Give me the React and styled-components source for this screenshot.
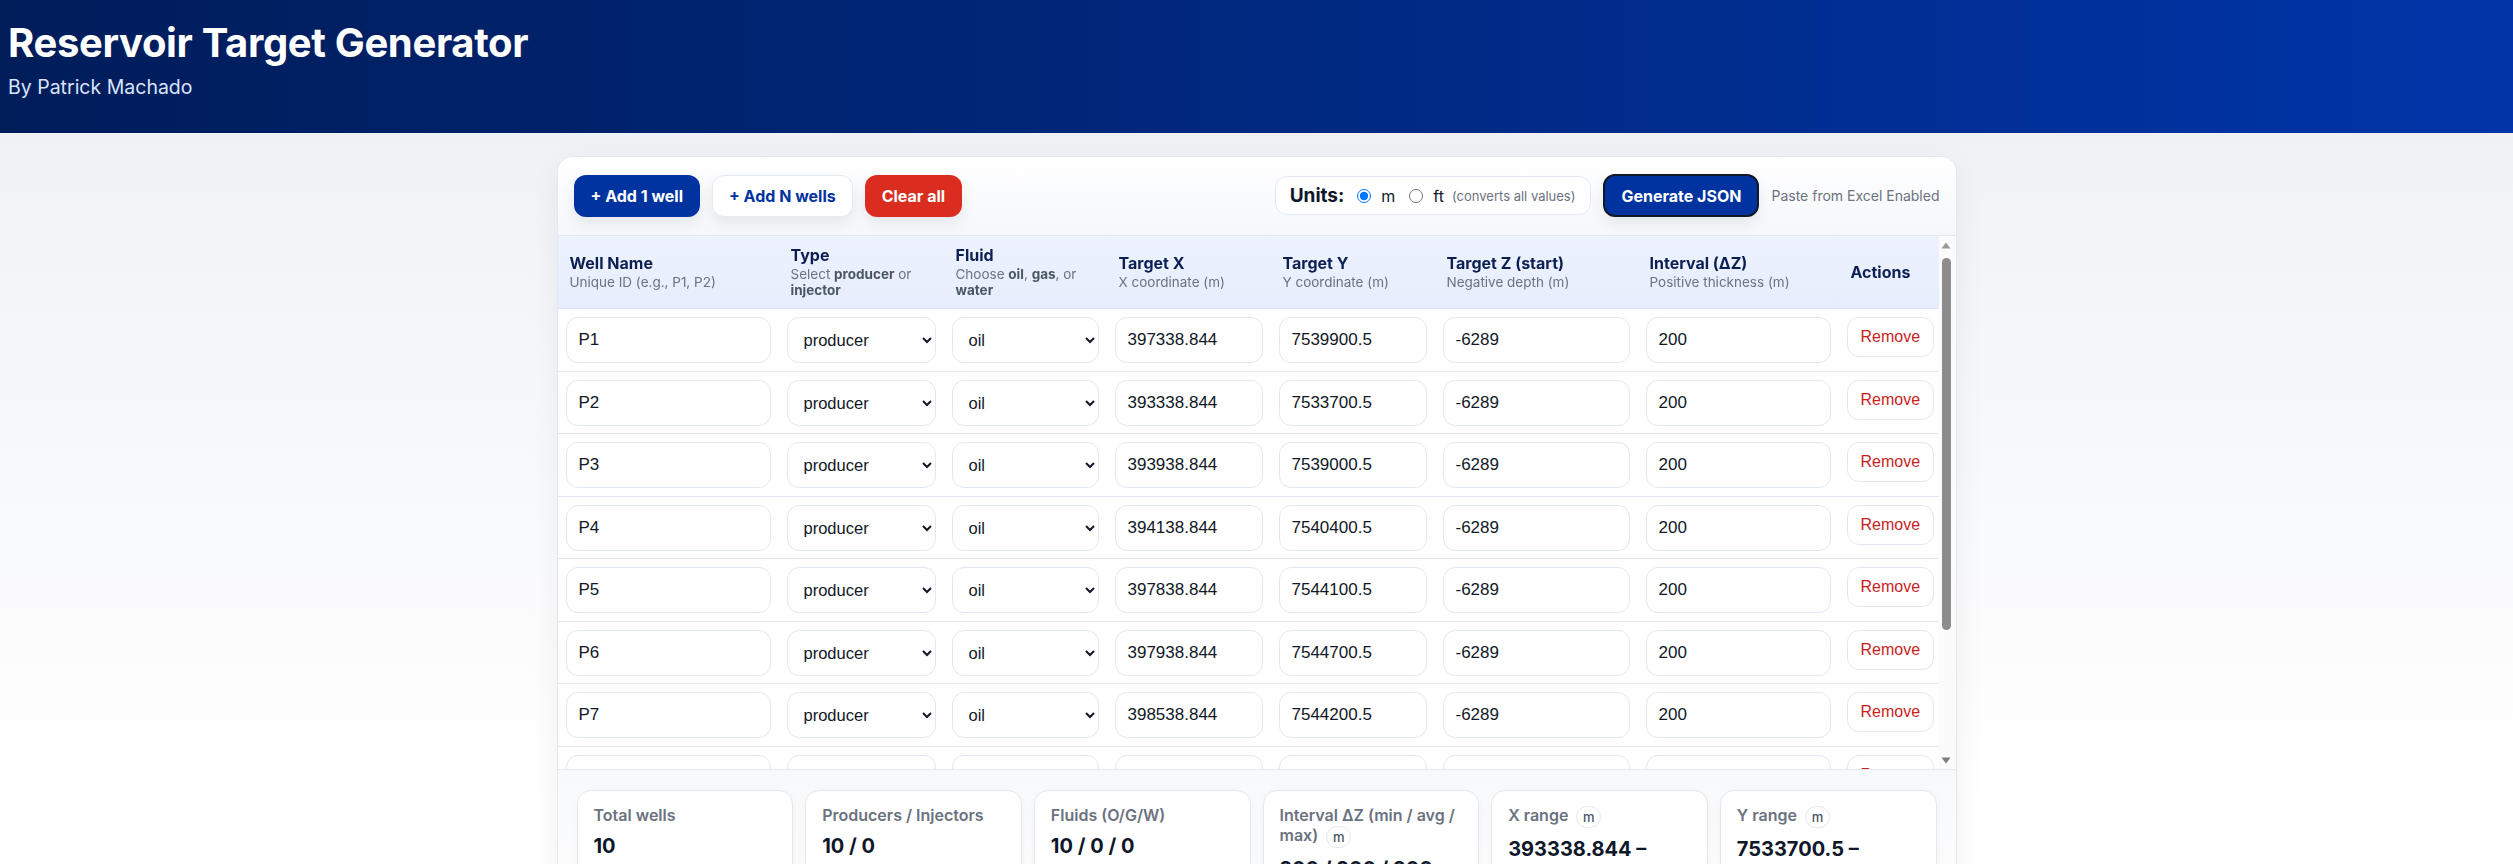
import React from "react";
import styled, { createGlobalStyle } from "styled-components";

const GlobalStyle = createGlobalStyle`
  html, body { margin: 0; padding: 0; }
  body {
    font-family: Inter, "Noto Sans", Arial, sans-serif;
    color: #0f172a;
    background: linear-gradient(180deg, #eceef3 0px, #f7f8fa 420px, #ffffff 800px);
    min-height: 100vh;
  }
  * { box-sizing: border-box; }
`;

const Header = styled.header`
  background: linear-gradient(90deg, #001d5a 0%, #00287f 50%, #0034a8 100%);
  padding: 19px 8px 33px;
  color: #fff;
`;

const Title = styled.h1`
  margin: 0;
  font-size: 40px;
  line-height: 48px;
  font-weight: 700;
  letter-spacing: -0.35px;
`;

const Subtitle = styled.p`
  margin: 7px 0 0;
  font-size: 19.5px;
  line-height: 26px;
  color: #dbe4ff;
`;

const Main = styled.main`
  padding: 23px 0 40px;
`;

const Card = styled.section`
  max-width: 1400px;
  margin: 0 auto;
  background: #fff;
  border: 1px solid #e3e7ee;
  border-radius: 16px;
  box-shadow: 0 10px 30px rgba(15, 23, 42, 0.06);
  overflow: hidden;
`;

const Toolbar = styled.div`
  display: flex;
  align-items: center;
  gap: 12px;
  padding: 17px 16px 18px 16px;
  border-bottom: 1px solid #e3e8f0;
  background: linear-gradient(180deg, #ffffff 0%, #f5f7fb 100%);
`;

const ToolGroup = styled.div`
  display: flex;
  align-items: center;
  gap: 12px;
  margin-left: ${(p) => (p.$right ? "auto" : "0")};
`;

const Button = styled.button`
  height: ${(p) => (p.$tall ? "43px" : "42px")};
  padding: 0 16px;
  border-radius: 12px;
  font-family: Inter, "Noto Sans", Arial, sans-serif;
  font-size: 16px;
  font-weight: 700;
  cursor: pointer;
  box-shadow: 0 6px 14px rgba(15, 23, 42, 0.08);
  background: ${(p) =>
    p.$variant === "danger" ? "#da2d20" : p.$variant === "ghost" ? "#ffffff" : "#0033a0"};
  color: ${(p) => (p.$variant === "ghost" ? "#0033a0" : "#ffffff")};
  border: ${(p) =>
    p.$focused
      ? "2px solid #111827"
      : p.$variant === "ghost"
      ? "1px solid #e5e9f0"
      : "1px solid transparent"};
`;

const UnitsBox = styled.div`
  display: flex;
  align-items: center;
  height: 39px;
  padding: 0 15px 0 14px;
  background: #fff;
  border: 1px solid #e3e8f0;
  border-radius: 12px;
`;

const UnitsLabel = styled.span`
  font-size: 19px;
  font-weight: 700;
  color: #0f172a;
  margin-right: 13px;
`;

const RadioLabel = styled.label`
  display: flex;
  align-items: center;
  gap: 10px;
  font-size: 16px;
  color: #111827;
  margin-right: ${(p) => (p.$gap ? p.$gap : "0px")};
`;

const Radio = styled.input`
  width: 14px;
  height: 14px;
  margin: 0;
`;

const Hint = styled.span`
  font-size: ${(p) => (p.$small ? "13px" : "14px")};
  color: #6b7280;
`;

const TableArea = styled.div`
  display: flex;
  height: 533px;
`;

const TableScroll = styled.div`
  flex: 1;
  min-width: 0;
  height: 100%;
  overflow-y: auto;
  scrollbar-width: none;
  &::-webkit-scrollbar { display: none; }
`;

const ScrollRail = styled.div`
  width: 17px;
  flex: none;
  display: flex;
  flex-direction: column;
  align-items: center;
  padding: 6px 2px 5px 0;
  background: #fbfbfb;
`;

const RailArrow = styled.svg`
  width: 10px;
  height: 7px;
  flex: none;
`;

const Thumb = styled.div`
  width: 9px;
  height: 372px;
  margin-top: 9px;
  border-radius: 5px;
  background: #8c8c8c;
`;

const RailSpacer = styled.div`
  flex: 1;
`;

const Table = styled.table`
  width: 100%;
  border-collapse: collapse;
  table-layout: fixed;
`;

const Col = styled.col`
  width: ${(p) => p.$w || "auto"};
`;

const Th = styled.th`
  position: sticky;
  top: 0;
  z-index: 1;
  text-align: left;
  vertical-align: middle;
  padding: 10px 12px;
  height: 72px;
  background: linear-gradient(180deg, #edf2fe 0%, #e6edfc 100%);
  border-bottom: 1px solid #dfe6f2;
`;

const ThTitle = styled.div`
  font-size: 16px;
  line-height: 19px;
  font-weight: 700;
  color: #0b1f52;
`;

const ThSub = styled.div`
  margin-top: 2px;
  font-size: 13.5px;
  line-height: 15.5px;
  font-weight: 400;
  color: #6b7280;

  b {
    font-weight: 700;
    color: #4b5563;
  }
`;

const Tr = styled.tr`
  border-bottom: 1px solid #e3e8f0;
`;

const Td = styled.td`
  padding: 8px 8px 7.5px;
  vertical-align: top;
`;

const Field = styled.input`
  width: 100%;
  height: 46px;
  padding: 0 12px;
  border: 1px solid #e2e8f0;
  border-radius: 12px;
  background: #fff;
  font-family: "Liberation Sans", Arial, sans-serif;
  font-size: 17px;
  color: #111827;
  outline: none;
`;

const Select = styled.select`
  width: 100%;
  height: 46px;
  padding: 0 8px 0 12px;
  border: 1px solid #e2e8f0;
  border-radius: 12px;
  background: #fff;
  font-family: "Liberation Sans", Arial, sans-serif;
  font-size: 16.5px;
  color: #111827;
  outline: none;
`;

const RemoveButton = styled.button`
  height: 40px;
  padding: 0 13px;
  border: 1px solid #e3e8f0;
  border-radius: 12px;
  background: #fff;
  color: #c81e1e;
  font-family: "Liberation Sans", Arial, sans-serif;
  font-size: 16px;
  cursor: pointer;
`;

const Summary = styled.div`
  display: grid;
  grid-template-columns: repeat(6, 1fr);
  gap: 12px;
  padding: 20px 19px 24px;
  border-top: 1px solid #e3e8f0;
  background: linear-gradient(180deg, #f8f9fb 0%, #ffffff 100%);
`;

const StatCard = styled.div`
  background: #fff;
  border: 1px solid #e3e8f0;
  border-radius: 14px;
  padding: 14px 16px 16px;
  box-shadow: 0 4px 12px rgba(15, 23, 42, 0.04);
`;

const StatLabel = styled.div`
  font-size: 16px;
  line-height: 20px;
  font-weight: 600;
  color: #6b7280;
`;

const Chip = styled.span`
  display: inline-flex;
  align-items: center;
  justify-content: center;
  width: 25px;
  height: 22px;
  margin-left: 8px;
  border: 1px solid #e3e8f0;
  border-radius: 999px;
  font-size: 13px;
  font-weight: 500;
  color: #4b5563;
  vertical-align: middle;
`;

const StatValue = styled.div`
  margin-top: 8px;
  font-size: 20px;
  line-height: 26px;
  font-weight: 700;
  color: #0f172a;
`;

const wells = [
  { name: "P1", x: "397338.844", y: "7539900.5" },
  { name: "P2", x: "393338.844", y: "7533700.5" },
  { name: "P3", x: "393938.844", y: "7539000.5" },
  { name: "P4", x: "394138.844", y: "7540400.5" },
  { name: "P5", x: "397838.844", y: "7544100.5" },
  { name: "P6", x: "397938.844", y: "7544700.5" },
  { name: "P7", x: "398538.844", y: "7544200.5" },
  { name: "P8", x: "396538.844", y: "7541200.5" },
  { name: "P9", x: "395338.844", y: "7537900.5" },
  { name: "P10", x: "394938.844", y: "7536400.5" },
];

const columns = [
  { w: "221px", title: "Well Name", sub: "Unique ID (e.g., P1, P2)" },
  {
    w: "165px",
    title: "Type",
    sub: (
      <>
        Select <b>producer</b> or <b>injector</b>
      </>
    ),
  },
  {
    w: "163px",
    title: "Fluid",
    sub: (
      <>
        Choose <b>oil</b>, <b>gas</b>, or <b>water</b>
      </>
    ),
  },
  { w: "164px", title: "Target X", sub: "X coordinate (m)" },
  { w: "164px", title: "Target Y", sub: "Y coordinate (m)" },
  { w: "203px", title: "Target Z (start)", sub: "Negative depth (m)" },
  { w: "201px", title: "Interval (ΔZ)", sub: "Positive thickness (m)" },
  { w: "auto", title: "Actions" },
];

const stats = [
  { label: "Total wells", value: "10" },
  { label: "Producers / Injectors", value: "10 / 0" },
  { label: "Fluids (O/G/W)", value: "10 / 0 / 0" },
  { label: "Interval ΔZ (min / avg / max)", unit: true, value: "200 / 200 / 200" },
  { label: "X range", unit: true, value: "393338.844 – 398538.844" },
  { label: "Y range", unit: true, value: "7533700.5 – 7544700.5" },
];

export default function App() {
  return (
    <>
      <GlobalStyle />
      <Header>
        <Title>Reservoir Target Generator</Title>
        <Subtitle>By Patrick Machado</Subtitle>
      </Header>
      <Main>
        <Card>
          <Toolbar>
            <ToolGroup>
              <Button>+ Add 1 well</Button>
              <Button $variant="ghost">+ Add N wells</Button>
              <Button $variant="danger">Clear all</Button>
            </ToolGroup>
            <ToolGroup $right>
              <UnitsBox>
                <UnitsLabel>Units:</UnitsLabel>
                <RadioLabel $gap="14px">
                  <Radio type="radio" name="units" defaultChecked />m
                </RadioLabel>
                <RadioLabel $gap="8px">
                  <Radio type="radio" name="units" />ft
                </RadioLabel>
                <Hint $small>(converts all values)</Hint>
              </UnitsBox>
              <Button $focused $tall>
                Generate JSON
              </Button>
              <Hint>Paste from Excel Enabled</Hint>
            </ToolGroup>
          </Toolbar>

          <TableArea>
            <TableScroll>
              <Table>
                <colgroup>
                  {columns.map((c) => (
                    <Col key={c.title} $w={c.w} />
                  ))}
                </colgroup>
                <thead>
                  <tr>
                    {columns.map((c) => (
                      <Th key={c.title}>
                        <ThTitle>{c.title}</ThTitle>
                        {c.sub && <ThSub>{c.sub}</ThSub>}
                      </Th>
                    ))}
                  </tr>
                </thead>
                <tbody>
                  {wells.map((w) => (
                    <Tr key={w.name}>
                      <Td>
                        <Field defaultValue={w.name} />
                      </Td>
                      <Td>
                        <Select defaultValue="producer">
                          <option value="producer">producer</option>
                          <option value="injector">injector</option>
                        </Select>
                      </Td>
                      <Td>
                        <Select defaultValue="oil">
                          <option value="oil">oil</option>
                          <option value="gas">gas</option>
                          <option value="water">water</option>
                        </Select>
                      </Td>
                      <Td>
                        <Field defaultValue={w.x} />
                      </Td>
                      <Td>
                        <Field defaultValue={w.y} />
                      </Td>
                      <Td>
                        <Field defaultValue="-6289" />
                      </Td>
                      <Td>
                        <Field defaultValue="200" />
                      </Td>
                      <Td>
                        <RemoveButton>Remove</RemoveButton>
                      </Td>
                    </Tr>
                  ))}
                </tbody>
              </Table>
            </TableScroll>
            <ScrollRail aria-hidden="true">
              <RailArrow viewBox="0 0 10 7">
                <path d="M5 0.5 L9.5 6.5 L0.5 6.5 Z" fill="#9a9a9a" />
              </RailArrow>
              <Thumb />
              <RailSpacer />
              <RailArrow viewBox="0 0 10 7">
                <path d="M0.5 0.5 L9.5 0.5 L5 6.5 Z" fill="#7d7d7d" />
              </RailArrow>
            </ScrollRail>
          </TableArea>

          <Summary>
            {stats.map((s) => (
              <StatCard key={s.label}>
                <StatLabel>
                  {s.label}
                  {s.unit && <Chip>m</Chip>}
                </StatLabel>
                <StatValue>{s.value}</StatValue>
              </StatCard>
            ))}
          </Summary>
        </Card>
      </Main>
    </>
  );
}
